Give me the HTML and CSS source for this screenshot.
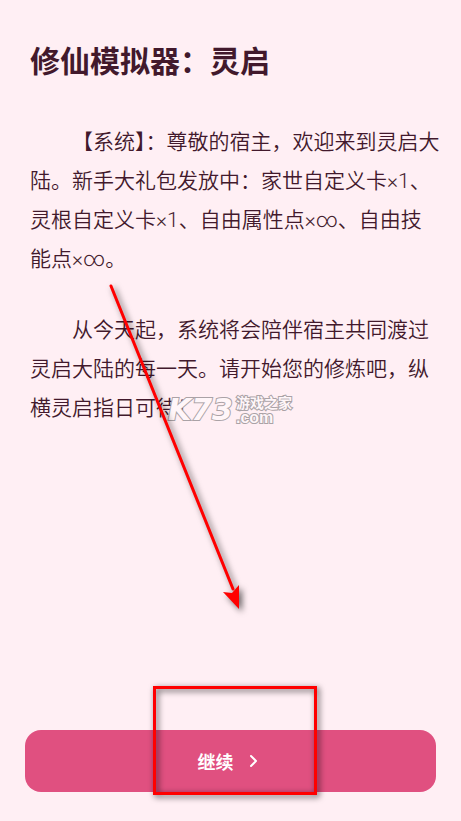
FILE: index.html
```html
<!DOCTYPE html>
<html lang="zh-CN">
<head>
    <meta charset="UTF-8">
    <meta name="viewport" content="width=device-width, initial-scale=1.0">
    <title>修仙模拟器：灵启</title>
    <link rel="stylesheet" href="styles.css">
</head>
<body>
    <div class="page">
        <main class="story">
            <h1 class="title">修仙模拟器：灵启</h1>
            <p>【系统】：尊敬的宿主，欢迎来到灵启大陆。新手大礼包发放中：家世自定义卡×1、灵根自定义卡×1、自由属性点×∞、自由技能点×∞。</p>
            <p>从今天起，系统将会陪伴宿主共同渡过灵启大陆的每一天。请开始您的修炼吧，纵横灵启指日可待！</p>
        </main>
        <button class="btn" type="button">
            继续
            <svg class="chevron" viewBox="0 0 16 16" aria-hidden="true">
                <path d="M3 3l5 5-5 5"/>
            </svg>
        </button>

        <div class="watermark">
            <span class="mark">K73</span>
            <span class="site">
                <span class="site-name">游戏之家</span>
                <span class="site-com">.com</span>
            </span>
        </div>
        <svg class="arrow" viewBox="0 0 150 340" aria-hidden="true">
            <path class="arrow-line" d="M11 6L133 309"/>
            <path class="arrow-head" d="M139 329L123 312L132 313L139 305Z"/>
        </svg>
        <div class="highlight"></div>
    </div>
</body>
</html>
```

FILE: styles.css
```css
*{
    padding: 0;
    margin: 0;
    box-sizing: border-box;
}

body{
    background-color: #ffeff4;
    color: #42192c;
    font-family: Roboto, "Noto Sans CJK SC", sans-serif;
}
.page{
    position: relative;
    min-height: 100vh;
    display: flex;
    flex-direction: column;
    padding: 39px 25px 29px;
}
.story{
    flex: 1;
    margin-left: 5px;
    margin-right: -5px;
}
.title{
    font-size: 30px;
    line-height: 46px;
    font-weight: 700;
    margin-bottom: 38px;
}
.story p{
    font-size: 21px;
    line-height: 39px;
    font-weight: 350;
    text-indent: 2em;
    margin-bottom: 32px;
}
.btn{
    width: 100%;
    height: 62px;
    display: flex;
    justify-content: center;
    align-items: center;
    gap: 14px;
    background-color: #e05080;
    color: white;
    font-family: inherit;
    font-size: 18px;
    font-weight: 700;
    border: none;
    border-radius: 16px;
    cursor: pointer;
}
.chevron{
    width: 16px;
    height: 16px;
    fill: none;
    stroke: white;
    stroke-width: 2;
    stroke-linecap: round;
    stroke-linejoin: round;
}

/* overlays */
.watermark{
    position: absolute;
    left: 168px;
    top: 396px;
    display: flex;
    align-items: center;
    gap: 3px;
    color: #fff6f9;
    -webkit-text-stroke: 2px #aaa2a6;
    paint-order: stroke fill;
    pointer-events: none;
}
.mark{
    font: italic bold 30px/28px "DejaVu Sans", sans-serif;
}
.site{
    display: flex;
    flex-direction: column;
}
.site-name{
    font-size: 14px;
    line-height: 15px;
    font-weight: 700;
}
.site-com{
    font: bold 16px/13px "Liberation Sans", sans-serif;
}
.arrow{
    position: absolute;
    left: 100px;
    top: 280px;
    width: 150px;
    height: 340px;
    filter: drop-shadow(3px 3px 3px rgba(0, 0, 0, 0.6));
    pointer-events: none;
}
.arrow-line{
    stroke: #f00;
    stroke-width: 3;
    stroke-linecap: round;
}
.arrow-head{
    fill: #f00;
}
.highlight{
    position: absolute;
    left: 153px;
    top: 686px;
    width: 164px;
    height: 109px;
    border: 3px solid #f00;
    filter: drop-shadow(2px 2px 3px rgba(0, 0, 0, 0.7));
    pointer-events: none;
}
```
